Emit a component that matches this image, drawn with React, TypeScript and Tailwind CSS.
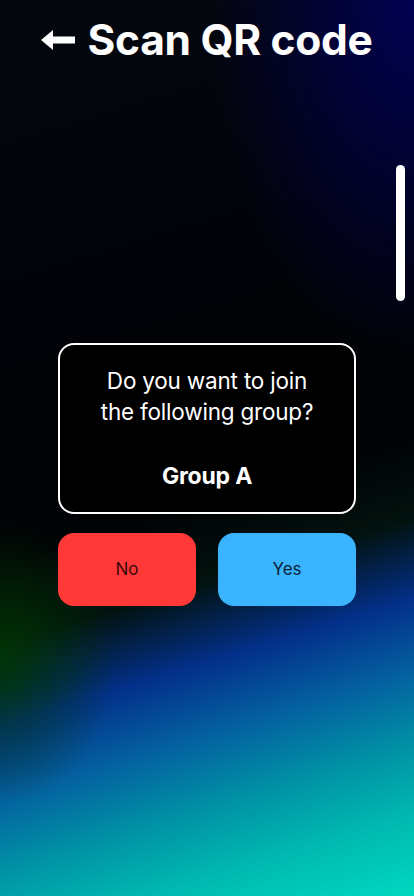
export default function App() {
  return (
    <main className="relative min-h-[896px] w-full overflow-hidden bg-[radial-gradient(ellipse_50%_40%_at_100%_0%,rgba(0,0,90,0.9),transparent),radial-gradient(ellipse_28%_16%_at_0%_74%,rgba(0,60,0,0.8),transparent),linear-gradient(163deg,#05070f_0%,#020309_30%,#010305_55%,#02120e_63%,#03308a_71%,#0460a0_78%,#0090a5_85%,#00b8b0_92%,#00d8c0_100%)] font-['Inter',sans-serif] text-white">
      <header className="flex items-center justify-center gap-3 pt-3">
        <svg width="34" height="22" viewBox="0 0 34 22" aria-hidden>
          <path d="M0 11 L12 1 L12 7.5 L34 7.5 L34 14.5 L12 14.5 L12 21 Z" fill="white" />
        </svg>
        <h1 className="text-[42.5px] font-bold leading-[56px] tracking-[-0.3px]">Scan QR code</h1>
      </header>

      <span className="absolute left-[396px] top-[165px] h-[136px] w-[9px] rounded-full bg-white" />

      <section className="mx-auto mt-[275px] flex w-[298px] flex-col items-center">
        <div className="flex w-full flex-col items-center rounded-[16px] border-[2.5px] border-white bg-black px-3 pb-[20px] pt-[20px] text-center text-[22.5px] leading-[31px] tracking-[-0.2px]">
          <p>Do you want to join<br />the following group?</p>
          <p className="mt-[34px] text-[23px] font-bold">Group A</p>
        </div>
        <div className="mt-[19px] flex w-full gap-[22px]">
          <button className="h-[73px] flex-1 rounded-[16px] bg-[#ff3838] text-[17px] text-[#3a0a0a]">No</button>
          <button className="h-[73px] flex-1 rounded-[16px] bg-[#3ab4ff] text-[17px] text-[#0a2238]">Yes</button>
        </div>
      </section>
    </main>
  );
}
